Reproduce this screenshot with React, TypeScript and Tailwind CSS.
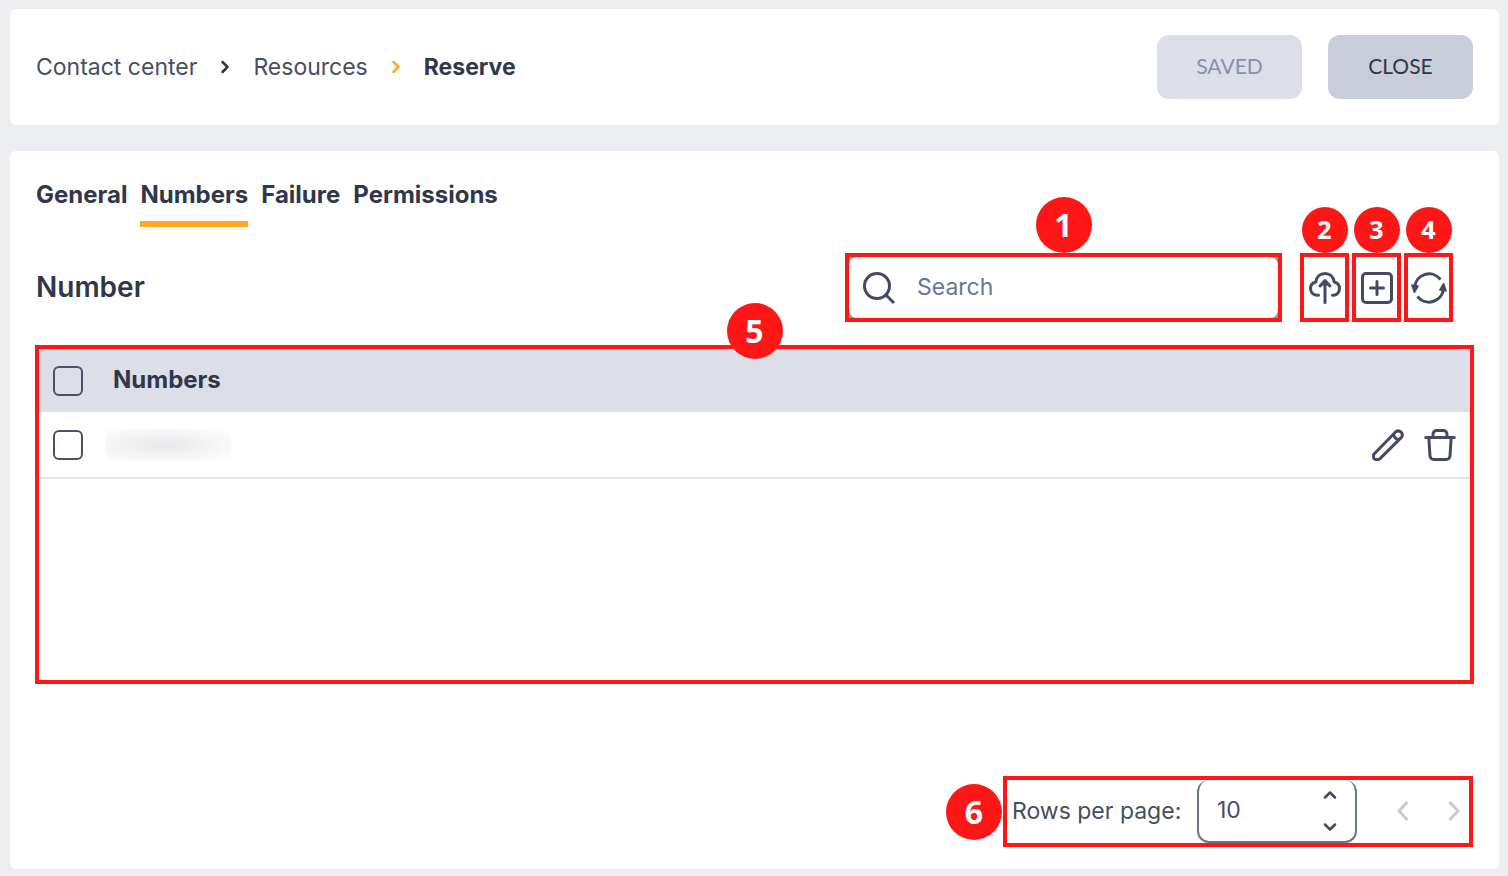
import React from 'react';
import { ChevronDown, ChevronRight, ChevronUp } from 'lucide-react';

const CloudUploadIcon = () => (
  <svg viewBox="0 0 32 32" className="size-8" fill="none" stroke="currentColor" strokeWidth="3" strokeLinecap="round" strokeLinejoin="round">
    <path d="M9.5 23.2C4.6 23.6 1.5 20.600 1.500 16.600c0-3.700 2.300-6 5.300-6.600C7.600 4.600 11.400 1.500 16 1.500s8.400 3.100 9.200 8.500c3 .6 5.300 2.900 5.300 6.600 0 4-3.100 7-7 6.600" />
    <path d="M16 30.500V9.500M11 14 16 8.500l5 5.500" />
    <path d="m12.500 12.800 3.500-4 3.500 4Z" fill="currentColor" strokeWidth="1" />
  </svg>
);

const AddIcon = () => (
  <svg viewBox="0 0 32 32" className="size-8" fill="none" stroke="currentColor" strokeWidth="3" strokeLinecap="round">
    <rect x="1.500" y="1.500" width="29" height="29" rx="3.500" />
    <path d="M16 9.500v13M9.500 16h13" />
  </svg>
);

const RefreshIcon = () => (
  <svg viewBox="0 0 36 32" className="h-8 w-9" fill="none" stroke="currentColor" strokeWidth="3">
    <path d="M29.500 7.500A14.500 14.500 0 0 0 3.600 15" />
    <path d="M6.500 24.500A14.500 14.500 0 0 0 32.400 17" />
    <path d="M1.200 13.200 6.800 14.200 3.400 20ZM29.200 17.800 34.800 18.800 32.600 12Z" fill="currentColor" strokeWidth="2" strokeLinejoin="round" />
  </svg>
);

const SearchIcon = () => (
  <svg viewBox="0 0 32 32" className="size-8 shrink-0" fill="none" stroke="currentColor" strokeWidth="3">
    <circle cx="14" cy="14" r="12.500" />
    <path d="m22.500 22.500 8.500 8.500" />
  </svg>
);

const PencilIcon = () => (
  <svg viewBox="0 0 32 32" className="size-8" fill="none" stroke="currentColor" strokeWidth="3" strokeLinejoin="round">
    <path d="M1.600 28.200V25.500L23.800 2.800a4 4 0 0 1 5.600 5.600L8 29.600a3 3 0 0 1-2 .8H3.600a2 2 0 0 1-2-2.200Z" />
    <path d="M21.600 5.200c.4 3.500 2 5.200 5.600 5.600" />
  </svg>
);

const TrashIcon = () => (
  <svg viewBox="0 0 32 32" className="size-8" fill="none" stroke="currentColor" strokeWidth="3" strokeLinecap="round" strokeLinejoin="round">
    <path d="M1.800 8.500h28.400" />
    <path d="M9 8.500V5.200A3.600 3.600 0 0 1 12.600 1.600h6.800a3.600 3.600 0 0 1 3.600 3.600V8.500" />
    <path d="M4.800 8.500 6 27a3.600 3.600 0 0 0 3.600 3.400h12.800A3.600 3.600 0 0 0 26 27L27.200 8.500" />
  </svg>
);

const PageArrow: React.FC<{ d: string }> = ({ d }) => (
  <svg viewBox="0 0 12 20" className="h-5 w-3" fill="none" stroke="currentColor" strokeWidth="3">
    <path d={d} />
  </svg>
);

const Badge: React.FC<{ label: string; className: string }> = ({ label, className }) => (
  <span
    className={`absolute flex items-center justify-center rounded-full bg-[#ff1616] font-['Open_Sans',sans-serif] font-bold text-white ${className}`}
  >
    {label}
  </span>
);

const tabs = ['General', 'Numbers', 'Failure', 'Permissions'];

const actions = [
  { badge: '2', name: 'Upload', icon: <CloudUploadIcon /> },
  { badge: '3', name: 'Add', icon: <AddIcon /> },
  { badge: '4', name: 'Refresh', icon: <RefreshIcon /> },
];

const checkboxStyle =
  'block size-[30px] appearance-none rounded-md border-2 border-[#4a5268] checked:bg-[#4a5268]';

const App: React.FC = () => {
  return (
    <div className="flex min-h-screen flex-col gap-[26px] bg-[#edeef2] pt-[9px] pr-[9px] pb-[7px] pl-[10px] font-['Inter',sans-serif] text-[#2f374a]">
      {/* Header */}
      <header className="flex items-center justify-between rounded-md bg-white p-[26px]">
        <nav aria-label="Breadcrumb" className="flex items-center text-[23px] leading-8">
          <a href="#contact-center" className="text-[#474e60]">Contact center</a>
          <ChevronRight className="mx-[18px] size-5" strokeWidth={3} />
          <a href="#resources" className="text-[#474e60]">Resources</a>
          <ChevronRight className="mx-[18px] size-5 text-[#ffa726]" strokeWidth={3} />
          <span className="font-bold">Reserve</span>
        </nav>
        <div className="flex gap-[26px] font-['Lato',sans-serif] text-[21px]">
          <button disabled className="h-16 w-[145px] rounded-xl bg-[#dcdee8] pb-[2px] text-[#8490b0]">SAVED</button>
          <button className="h-16 w-[145px] rounded-xl bg-[#cacdda] pb-[2px]">CLOSE</button>
        </div>
      </header>

      <main className="flex flex-1 flex-col rounded-md bg-white px-[26px] pt-7 pb-[22px]">
        {/* Tabs */}
        <nav className="flex gap-[13px] text-2xl leading-8 font-bold">
          {tabs.map((tab) => (
            <a
              key={tab}
              href={`#${tab.toLowerCase()}`}
              className={`border-b-6 pb-[10px] ${tab === 'Numbers' ? 'border-[#ffa726]' : 'border-transparent'}`}
            >
              {tab}
            </a>
          ))}
        </nav>

        {/* Toolbar */}
        <div className="mt-[26px] flex items-center justify-between pr-5">
          <h1 className="pb-[2px] text-[28px] leading-8 font-semibold">Number</h1>
          <div className="flex gap-[18px] text-[#434b62]">
            <div className="relative w-[437px] border-4 border-[#ff1616] bg-[#8a93aa]">
              <Badge label="1" className="bottom-full left-1/2 mb-1 size-14 -translate-x-1/2 text-[32px]" />
              <label className="flex h-[61px] items-center gap-[22px] rounded-lg bg-white px-[14px]">
                <SearchIcon />
                <input
                  type="search"
                  aria-label="Search"
                  placeholder="Search"
                  className="w-full text-[23px] outline-none placeholder:text-[#69759a]"
                />
              </label>
            </div>
            <div className="flex gap-[3px]">
              {actions.map((action) => (
                <div key={action.name} className="relative border-4 border-[#ff1616]">
                  <Badge label={action.badge} className="bottom-full left-1/2 mb-1 size-[46px] -translate-x-1/2 text-[25px]" />
                  <button aria-label={action.name} className="flex h-[61px] w-[41px] items-center justify-center">
                    <span className="shrink-0">{action.icon}</span>
                  </button>
                </div>
              ))}
            </div>
          </div>
        </div>

        {/* Numbers table */}
        <div className="relative -mx-px mt-[23px] min-h-[200px] flex-1 border-4 border-[#ff1616]">
          <Badge label="5" className="bottom-full left-1/2 -mb-[10px] size-14 -translate-x-1/2 text-[32px]" />
          <table className="w-full text-left">
            <thead>
              <tr className="h-[63px] bg-[#dcdee8]">
                <th className="w-[67px] pl-[14px]">
                  <input type="checkbox" aria-label="Select all numbers" className={checkboxStyle} />
                </th>
                <th className="pb-[2px] pl-[7px] text-2xl leading-8 font-bold">Numbers</th>
                <th />
              </tr>
            </thead>
            <tbody>
              <tr className="h-[66px] border-b-2 border-[#dfe3ea]">
                <td className="pl-[14px]">
                  <input type="checkbox" aria-label="Select number" className={checkboxStyle} />
                </td>
                <td>
                  <div className="h-8 w-[125px] bg-radial-[ellipse_at_45%_50%] from-[#e9eaec] from-10% to-[#ffffff] to-95%" />
                </td>
                <td className="pr-[14px] text-[#434b62]">
                  <div className="flex justify-end gap-5">
                    <button aria-label="Edit"><PencilIcon /></button>
                    <button aria-label="Delete"><TrashIcon /></button>
                  </div>
                </td>
              </tr>
            </tbody>
          </table>
        </div>

        {/* Pagination */}
        <div className="relative mt-[92px] flex items-center self-end border-4 border-[#ff1616] pl-[5px]">
          <Badge label="6" className="top-1/2 right-full mr-[5px] size-14 -translate-y-1/2 text-[32px]" />
          <label htmlFor="rows" className="w-[185px] pb-[2px] text-[23px] leading-8 whitespace-nowrap text-[#474e60]">Rows per page:</label>
          <div className="flex h-[63px] w-40 items-center justify-between rounded-xl border-2 border-t-0 border-[#69748f] pr-[15px] pl-[18px]">
            <input
              id="rows"
              type="number"
              defaultValue={10}
              className="w-16 appearance-none text-[23px] text-[#474e60] outline-none [-moz-appearance:textfield] [&::-webkit-inner-spin-button]:appearance-none"
            />
            <div className="flex flex-col gap-3 text-[#434b62]">
              <button aria-label="More rows"><ChevronUp className="size-5" strokeWidth={3} /></button>
              <button aria-label="Fewer rows"><ChevronDown className="size-5" strokeWidth={3} /></button>
            </div>
          </div>
          <div className="flex gap-[39px] pr-[9px] pb-[2px] pl-10 text-[#c5cad9]">
            <button aria-label="Previous page"><PageArrow d="M10.500 1 2 10l8.500 9" /></button>
            <button aria-label="Next page"><PageArrow d="M1.500 1 10 10l-8.500 9" /></button>
          </div>
        </div>
      </main>
    </div>
  );
};

export default App;
